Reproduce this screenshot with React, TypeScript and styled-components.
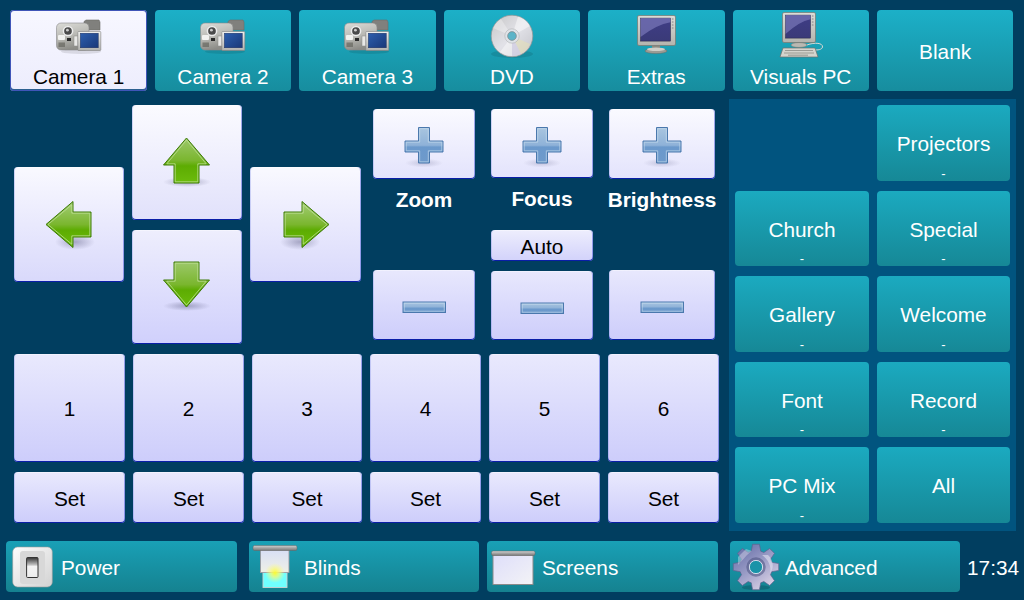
import React from "react";
import styled, { createGlobalStyle } from "styled-components";

const Global = createGlobalStyle`
  html, body { margin: 0; padding: 0; background: #013e60; }
  * { box-sizing: border-box; }
`;

const Page = styled.div`
  width: 1024px;
  height: 600px;
  overflow: hidden;
  background: #013e60;
  font-family: "Liberation Sans", Arial, sans-serif;
  font-size: 20.8px;
  color: #fff;
  display: flex;
  flex-direction: column;
`;

const Base = styled.button`
  margin: 0;
  padding: 0;
  border: 0;
  font: inherit;
  border-radius: 4px;
  display: flex;
  align-items: center;
  justify-content: center;
`;

const Light = styled(Base)<{ $from?: string; $to?: string }>`
  color: #000;
  background: linear-gradient(${(p) => p.$from || "#e9e9fd"}, ${(p) => p.$to || "#cdcdfb"});
  box-shadow: inset 0 1px 0 rgba(255, 255, 255, 0.4), inset 1px 0 0 rgba(70, 90, 220, 0.22),
    inset -1px 0 0 rgba(50, 70, 210, 0.45), inset 0 -1px 0 #0a1ea8;
`;

const TextButton = styled(Light)`
  padding-top: 2px;
`;

const Teal = styled(Base)`
  color: #fff;
  background: linear-gradient(#1cb0c8, #178d9e);
`;

const TopBar = styled.div`
  display: grid;
  grid-template-columns: repeat(7, 136.43px);
  gap: 8px;
  height: 81px;
  margin: 10px 0 0 10.4px;
`;

const TabTeal = styled(Teal)`
  flex-direction: column;
  justify-content: flex-start;
  padding-top: 2px;
`;

const TabActive = styled(TabTeal)`
  color: #000;
  background: linear-gradient(#f7f7ff, #ededfd);
  box-shadow: inset 0 0 0 1px #3f55b8, inset 0 -1px 0 1px #2c6090;
`;

const BlankTab = styled(Teal)`
  padding-top: 3px;
`;

const TabLabel = styled.span`
  margin-top: 5px;
  line-height: 24px;
  height: 24px;
`;

const Middle = styled.div`
  display: flex;
  margin-top: 8px;
  height: 432px;
`;

const Controls = styled.div`
  width: 705px;
  margin-left: 14px;
  padding-top: 6px;
  display: flex;
  flex-direction: column;
  gap: 10px;
`;

const PtzRow = styled.div`
  display: flex;
  height: 239px;
  gap: 12px;
`;

const Dpad = styled.div`
  display: flex;
  gap: 8px;
`;

const DpadColumn = styled.div<{ $w: number }>`
  width: ${(p) => p.$w}px;
  display: flex;
  flex-direction: column;
  justify-content: center;
  gap: 10px;
`;

const DpadButton = styled(Light)<{ $h: number }>`
  height: ${(p) => p.$h}px;
  width: 100%;
`;

const Adjusters = styled.div`
  display: flex;
  gap: 16px;
  padding-top: 4px;
`;

const AdjustColumn = styled.div<{ $w: number }>`
  width: ${(p) => p.$w}px;
  height: 231px;
  display: flex;
  flex-direction: column;
`;

const AdjustButton = styled(Light)<{ $h: number; $end?: boolean }>`
  height: ${(p) => p.$h}px;
  flex: none;
  ${(p) => (p.$end ? "margin-top: auto;" : "")}
`;

const AdjustLabel = styled.div`
  height: 42px;
  line-height: 42px;
  margin: 0 -6px;
  font-weight: bold;
  text-align: center;
  white-space: nowrap;
`;

const AutoButton = styled(TextButton)`
  height: 31px;
  flex: none;
  margin-top: 10px;
`;

const Presets = styled.div`
  display: grid;
  grid-template-columns: 111px 111px 110px 111px 111px 111px;
  grid-template-rows: 108px 51px;
  gap: 10px 8px;
`;

const Panel = styled.div`
  width: 287px;
  margin-left: 10px;
  padding: 6px;
  background: #01547f;
  display: grid;
  grid-template-columns: 134px 133px;
  grid-template-rows: 76px 75px 76px 75px 76px;
  gap: 10px 8px;
`;

const Source = styled(Teal)`
  position: relative;
  padding-top: 2px;
  background: linear-gradient(#1baac0, #168896);
`;

const Dash = styled.span`
  position: absolute;
  left: 0;
  right: 0;
  bottom: 0;
  font-size: 13px;
  line-height: 15px;
  text-align: center;
`;

const Spacer = styled.div``;

const BottomBar = styled.div`
  display: flex;
  align-items: center;
  height: 51px;
  margin-top: 10px;
  padding-left: 6px;
`;

const BarButton = styled(Teal)<{ $w: number; $gap: number }>`
  width: ${(p) => p.$w}px;
  height: 51px;
  margin-left: ${(p) => p.$gap}px;
  padding-left: 2px;
  justify-content: flex-start;
  gap: 5px;
  background: linear-gradient(#19a0b6, #158290);
`;

const BarLabel = styled.span`
  margin-top: 2px;
`;

const Clock = styled.div`
  margin-left: 7px;
  margin-top: 2px;
  white-space: nowrap;
`;

const IconSvg = styled.svg<{ $lift?: number; $drop?: number }>`
  width: 48px;
  height: 48px;
  flex: none;
  display: block;
  overflow: visible;
  margin-bottom: ${(p) => p.$lift || 0}px;
  margin-top: ${(p) => p.$drop || 0}px;
`;

/* ---------- icons ---------- */

const Camera = () => (
  <IconSvg viewBox="0 0 48 48">
    <defs>
      <linearGradient id="camBody" x1="0" y1="0" x2="0.3" y2="1">
        <stop offset="0" stopColor="#dcdcd8" />
        <stop offset="0.55" stopColor="#b9b9b4" />
        <stop offset="1" stopColor="#8c8c87" />
      </linearGradient>
      <linearGradient id="camScreen" x1="0" y1="0" x2="1" y2="1">
        <stop offset="0" stopColor="#2d5fae" />
        <stop offset="1" stopColor="#1a3878" />
      </linearGradient>
      <linearGradient id="camFrame" x1="0" y1="0" x2="0" y2="1">
        <stop offset="0" stopColor="#efefed" />
        <stop offset="1" stopColor="#b2b2ae" />
      </linearGradient>
    </defs>
    <ellipse cx="26" cy="39.5" rx="20" ry="2.5" fill="#000" opacity="0.1" />
    <path d="M29 9.5 L31 8 L44 8 L45 10 L45 18 L29 18 Z" fill="#80807d" stroke="#6c6c6a" strokeWidth="0.6" />
    <rect x="1.5" y="11" width="32.5" height="27" rx="4.5" fill="url(#camBody)" stroke="#88888a" strokeWidth="0.6" />
    <circle cx="13" cy="19" r="4.6" fill="#4a4a4a" stroke="#ececec" strokeWidth="1.5" />
    <circle cx="12.4" cy="18.2" r="1.4" fill="#ccc" />
    <rect x="3" y="23" width="7" height="5" rx="1" fill="#f2f2f0" />
    <rect x="12" y="26" width="4" height="3" fill="#2a2a2a" />
    <rect x="3.5" y="30.5" width="6.5" height="4.5" fill="#66665f" opacity="0.7" />
    <rect x="19" y="24" width="4" height="10" fill="#e8e8e6" stroke="#8a8a88" strokeWidth="0.5" />
    <rect x="22.8" y="19.5" width="23" height="19" rx="0.8" fill="url(#camFrame)" stroke="#80807f" strokeWidth="0.6" />
    <rect x="25.3" y="21.2" width="18" height="14.6" fill="url(#camScreen)" stroke="#1a2a55" strokeWidth="0.4" />
  </IconSvg>
);

const Disc = () => (
  <IconSvg viewBox="0 0 48 48">
    <defs>
      <linearGradient id="discBase" x1="0" y1="0" x2="1" y2="1">
        <stop offset="0" stopColor="#c6c6c6" />
        <stop offset="0.5" stopColor="#e2e2e8" />
        <stop offset="1" stopColor="#c2c2c8" />
      </linearGradient>
    </defs>
    <ellipse cx="24" cy="42" rx="21" ry="4" fill="#000" opacity="0.1" />
    <circle cx="24" cy="24" r="20.8" fill="url(#discBase)" stroke="#959595" strokeWidth="0.7" />
    <path d="M24 24 L30 4.5 A20 20 0 0 1 42 14 Z" fill="#fff" opacity="0.45" />
    <path d="M24 24 L5 16 A20 20 0 0 1 13 7 Z" fill="#fff" opacity="0.3" />
    <path d="M24 24 L12 40 A20 20 0 0 0 24 44 Z" fill="#fff" opacity="0.45" />
    <path d="M24 24 L42 32 A20 20 0 0 1 33 42 Z" fill="#e4e0b8" opacity="0.6" />
    <path d="M24 24 L24 44 A20 20 0 0 0 33 42 Z" fill="#d4d0e6" opacity="0.7" />
    <circle cx="24" cy="24" r="7.2" fill="#dfe3e8" stroke="#a8a8a8" strokeWidth="0.5" />
    <circle cx="24" cy="24" r="4.4" fill="#5cb4c8" stroke="#808080" strokeWidth="0.6" />
  </IconSvg>
);

const MonitorShape = ({ x, y, w, h }: { x: number; y: number; w: number; h: number }) => (
  <g>
    <defs>
      <linearGradient id="monScreen" x1="0" y1="0" x2="0" y2="1">
        <stop offset="0" stopColor="#3f3d86" />
        <stop offset="1" stopColor="#3a3a78" />
      </linearGradient>
      <linearGradient id="monFrame" x1="0" y1="0" x2="0" y2="1">
        <stop offset="0" stopColor="#dcdcd8" />
        <stop offset="1" stopColor="#b4b4ae" />
      </linearGradient>
    </defs>
    <rect x={x} y={y} width={w} height={h} rx="1.5" fill="url(#monFrame)" stroke="#77776f" strokeWidth="0.7" />
    <rect x={x + 3} y={y + 2.6} width={w - 8} height={h - 7} fill="url(#monScreen)" stroke="#23233f" strokeWidth="0.5" />
    <path
      d={`M${x + 3} ${y + 2.6} h${w - 8} v${(h - 7) * 0.18} Q${x + w * 0.5} ${y + h * 0.3} ${x + 3} ${y + h * 0.72} Z`}
      fill="#8b88c8"
      opacity="0.55"
    />
    <rect x={x + w - 3.6} y={y + 3} width="1.6" height="1" fill="#888" />
    <rect x={x + w - 3.6} y={y + 6} width="1.6" height="1" fill="#888" />
    <rect x={x + w - 3.6} y={y + 9} width="1.6" height="1" fill="#888" />
    <rect x={x + w - 3.6} y={y + 12} width="1.6" height="1" fill="#888" />
  </g>
);

const Monitor = () => (
  <IconSvg viewBox="0 0 48 48">
    <ellipse cx="24" cy="39" rx="11" ry="2.6" fill="#9b9b94" stroke="#6d6d66" strokeWidth="0.5" />
    <rect x="20" y="33" width="8" height="4" fill="#8a8a82" />
    <ellipse cx="24" cy="37.2" rx="9" ry="1.8" fill="#cfcfc8" />
    <MonitorShape x={5.5} y={3.5} w={38} h={30} />
  </IconSvg>
);

const Computer = () => (
  <IconSvg viewBox="0 0 48 48">
    <path d="M30 33 C38 30 46 31 45.5 35 C45 38 40 38 38 38" fill="none" stroke="#d8d8d4" strokeWidth="1" />
    <ellipse cx="22" cy="33" rx="8" ry="2.4" fill="#b9b9b2" stroke="#77776f" strokeWidth="0.5" />
    <MonitorShape x={5.5} y={0.5} w={33} h={30} />
    <path d="M6 36 L38 36 L41 45 L3 45 Z" fill="#d4d4ce" stroke="#70706a" strokeWidth="0.7" />
    <path d="M8 38.5 H36 M7 41 H37" stroke="#8d8d86" strokeWidth="0.8" />
    <path d="M11 43.2 H31" stroke="#a0a098" strokeWidth="1.2" />
  </IconSvg>
);

type Dir = "up" | "down" | "left" | "right";
const mapPt = (d: Dir, x: number, y: number): string => {
  if (d === "up") return `${x},${y}`;
  if (d === "down") return `${x},${48 - y}`;
  if (d === "left") return `${y},${x}`;
  return `${48 - y},${x}`;
};
const outer: [number, number][] = [
  [23.5, 1], [46.5, 28], [36, 28], [36, 46], [11, 46], [11, 28], [0.5, 28],
];
const inner: [number, number][] = [
  [23.5, 3], [43.2, 26.8], [34.8, 26.8], [34.8, 44.8], [12.2, 44.8], [12.2, 26.8], [3.8, 26.8],
];
const pts = (d: Dir, list: [number, number][]) => list.map(([x, y]) => mapPt(d, x, y)).join(" ");

const shadows: Record<Dir, { cx: number; cy: number; rx: number; ry: number }> = {
  up: { cx: 24, cy: 45, rx: 24, ry: 5 },
  down: { cx: 24, cy: 46, rx: 24, ry: 5 },
  left: { cx: 30, cy: 41, rx: 20, ry: 8 },
  right: { cx: 18, cy: 41, rx: 20, ry: 8 },
};

const Arrow = ({ dir }: { dir: Dir }) => {
  const s = shadows[dir];
  const lift = dir === "up" ? 3 : dir === "down" ? 6 : 0;
  return (
    <IconSvg viewBox="0 0 48 48" $lift={lift}>
      <defs>
        <linearGradient id={`arrow-${dir}`} x1="0" y1="0" x2="0" y2="1">
          <stop offset="0" stopColor={dir === "up" || dir === "down" ? "#9cc86a" : "#a4cd78"} />
          <stop offset="0.5" stopColor="#7ab62e" />
          <stop offset="0.62" stopColor="#5dac02" />
          <stop offset="1" stopColor="#6cbc0c" />
        </linearGradient>
        <radialGradient id="arrowShadow">
          <stop offset="0" stopColor="#5a5a80" stopOpacity="0.45" />
          <stop offset="1" stopColor="#5a5a80" stopOpacity="0" />
        </radialGradient>
      </defs>
      <ellipse cx={s.cx} cy={s.cy} rx={s.rx} ry={s.ry} fill="url(#arrowShadow)" />
      <polygon points={pts(dir, outer)} fill={`url(#arrow-${dir})`} stroke="#3c7a06" strokeWidth="1" />
      <polygon points={pts(dir, inner)} fill="none" stroke="#c2e29a" strokeOpacity="0.75" strokeWidth="1" />
    </IconSvg>
  );
};

const BlueDefs = () => (
  <defs>
    <linearGradient id="blueFill" x1="0" y1="0" x2="0" y2="1">
      <stop offset="0" stopColor="#a9c5e0" />
      <stop offset="0.5" stopColor="#8fb2d8" />
      <stop offset="0.55" stopColor="#6b99cc" />
      <stop offset="1" stopColor="#6e9acb" />
    </linearGradient>
    <radialGradient id="plusShadow">
      <stop offset="0" stopColor="#6a6a90" stopOpacity="0.3" />
      <stop offset="1" stopColor="#6a6a90" stopOpacity="0" />
    </radialGradient>
  </defs>
);

const Plus = () => (
  <IconSvg viewBox="0 0 48 48" $drop={4}>
    <BlueDefs />
    <ellipse cx="24" cy="41" rx="19" ry="4.5" fill="url(#plusShadow)" />
    <path
      d="M18.5 5.5 H29.5 V19 H43 V30 H29.5 V41 H18.5 V30 H5 V19 H18.5 Z"
      fill="url(#blueFill)"
      stroke="#4a78ad"
      strokeWidth="1"
    />
    <path
      d="M19.7 6.7 H28.3 V20.2 H41.8 V28.8 H28.3 V39.8 H19.7 V28.8 H6.2 V20.2 H19.7 Z"
      fill="none"
      stroke="#c8dcee"
      strokeOpacity="0.7"
      strokeWidth="0.9"
    />
  </IconSvg>
);

const Minus = () => (
  <IconSvg viewBox="0 0 48 48" $drop={4}>
    <BlueDefs />
    <rect x="3" y="19" width="42.5" height="10.5" fill="url(#blueFill)" stroke="#4a78ad" strokeWidth="1" />
    <rect x="4.2" y="20.2" width="40" height="8" fill="none" stroke="#c8dcee" strokeOpacity="0.7" strokeWidth="0.9" />
  </IconSvg>
);

const PowerIcon = () => (
  <IconSvg viewBox="0 0 48 48">
    <defs>
      <linearGradient id="swPlate" x1="0" y1="0" x2="1" y2="1">
        <stop offset="0" stopColor="#fdfdfd" />
        <stop offset="1" stopColor="#d2d2d2" />
      </linearGradient>
      <linearGradient id="swKey" x1="0" y1="0" x2="0" y2="1">
        <stop offset="0" stopColor="#333" />
        <stop offset="0.35" stopColor="#bbb" />
        <stop offset="0.45" stopColor="#f4f4f4" />
        <stop offset="1" stopColor="#ededed" />
      </linearGradient>
    </defs>
    <rect x="4.7" y="4" width="39.6" height="40" rx="5" fill="url(#swPlate)" stroke="#9a9a9a" strokeWidth="0.6" />
    <rect x="12" y="8" width="25" height="33" rx="3" fill="#d8d8d8" />
    <rect x="18.6" y="14.5" width="11.4" height="20" rx="1" fill="url(#swKey)" stroke="#333" strokeWidth="1" />
  </IconSvg>
);

const BlindsIcon = () => (
  <IconSvg viewBox="0 0 48 48">
    <defs>
      <linearGradient id="barGrey" x1="0" y1="0" x2="0" y2="1">
        <stop offset="0" stopColor="#d0d0d0" />
        <stop offset="1" stopColor="#777" />
      </linearGradient>
      <linearGradient id="blindCloth" x1="0" y1="0" x2="0" y2="1">
        <stop offset="0" stopColor="#d8dff5" />
        <stop offset="1" stopColor="#eff0e6" />
      </linearGradient>
      <radialGradient id="sun">
        <stop offset="0" stopColor="#fbfb30" />
        <stop offset="0.4" stopColor="#fafa70" stopOpacity="0.75" />
        <stop offset="1" stopColor="#fafa90" stopOpacity="0" />
      </radialGradient>
    </defs>
    <rect x="12" y="29" width="24" height="15.5" fill="#70ffff" stroke="#d0d0d0" strokeWidth="0.9" />
    <rect x="9.5" y="7" width="28.5" height="22.5" fill="url(#blindCloth)" stroke="#9a9aa0" strokeWidth="0.9" />
    <circle cx="24" cy="30" r="10" fill="url(#sun)" />
    <rect x="2" y="2.5" width="44" height="5" rx="1.5" fill="url(#barGrey)" stroke="#666" strokeWidth="0.5" />
  </IconSvg>
);

const ScreenIcon = () => (
  <IconSvg viewBox="0 0 48 48">
    <defs>
      <linearGradient id="screenCloth" x1="0" y1="0" x2="1" y2="1">
        <stop offset="0" stopColor="#dedefa" />
        <stop offset="1" stopColor="#f3f3f6" />
      </linearGradient>
      <linearGradient id="screenBar" x1="0" y1="0" x2="0" y2="1">
        <stop offset="0" stopColor="#d4d4d4" />
        <stop offset="1" stopColor="#777" />
      </linearGradient>
    </defs>
    <rect x="4" y="12" width="40" height="29.5" fill="url(#screenCloth)" stroke="#8a8a8a" strokeWidth="1" />
    <rect x="2.5" y="8" width="43.5" height="4.5" rx="1.5" fill="url(#screenBar)" stroke="#666" strokeWidth="0.5" />
  </IconSvg>
);

const gearPath = (() => {
  const teeth = 8;
  const cx = 24;
  const cy = 24;
  const ro = 23;
  const ri = 16.5;
  const p: string[] = [];
  for (let i = 0; i < teeth; i++) {
    const a = (i * Math.PI * 2) / teeth - Math.PI / 2;
    const w1 = 0.24;
    const w2 = 0.15;
    const pt = (r: number, t: number) => `${(cx + r * Math.cos(t)).toFixed(2)} ${(cy + r * Math.sin(t)).toFixed(2)}`;
    p.push(`${i === 0 ? "M" : "L"}${pt(ri, a - w1 - 0.05)}`);
    p.push(`L${pt(ro, a - w2)}`);
    p.push(`L${pt(ro, a + w2)}`);
    p.push(`L${pt(ri, a + w1 + 0.05)}`);
  }
  return p.join(" ") + " Z";
})();

const GearIcon = () => (
  <IconSvg viewBox="0 0 48 48">
    <defs>
      <linearGradient id="gearFill" x1="0.1" y1="0.2" x2="0.7" y2="1">
        <stop offset="0" stopColor="#7178ae" />
        <stop offset="0.45" stopColor="#9a9cc6" />
        <stop offset="1" stopColor="#d8d0e4" />
      </linearGradient>
    </defs>
    <ellipse cx="24" cy="44.5" rx="14" ry="2.5" fill="#0b4a5c" opacity="0.4" />
    <path d={gearPath} fill="url(#gearFill)" stroke="#5c628e" strokeWidth="0.7" strokeLinejoin="round" />
    <path d="M6 22 C12 16 14 12 20 8 L14 6 L6 14 Z" fill="#e3e3f2" opacity="0.4" />
    <path d="M30 12 C36 16 40 24 38 30 C42 26 42 18 36 12 Z" fill="#e8e8f4" opacity="0.55" />
    <circle cx="24" cy="24" r="8.4" fill="none" stroke="#4a5280" strokeOpacity="0.55" strokeWidth="2.6" />
    <circle cx="24" cy="24" r="6.6" fill="#1a93a8" stroke="#eeeef6" strokeWidth="0.8" />
  </IconSvg>
);

/* ---------- data ---------- */

const tabs = [
  { label: "Camera 1", icon: <Camera />, active: true },
  { label: "Camera 2", icon: <Camera /> },
  { label: "Camera 3", icon: <Camera /> },
  { label: "DVD", icon: <Disc /> },
  { label: "Extras", icon: <Monitor /> },
  { label: "Visuals PC", icon: <Computer /> },
];

const sources: { label: string; dash: boolean }[] = [
  { label: "Projectors", dash: true },
  { label: "Church", dash: true },
  { label: "Special", dash: true },
  { label: "Gallery", dash: true },
  { label: "Welcome", dash: true },
  { label: "Font", dash: true },
  { label: "Record", dash: true },
  { label: "PC Mix", dash: true },
  { label: "All", dash: false },
];

const bar = [
  { label: "Power", icon: <PowerIcon />, w: 231, gap: 0 },
  { label: "Blinds", icon: <BlindsIcon />, w: 230, gap: 12 },
  { label: "Screens", icon: <ScreenIcon />, w: 231, gap: 8 },
  { label: "Advanced", icon: <GearIcon />, w: 230, gap: 12 },
];

export default function App() {
  return (
    <Page>
      <Global />
      <TopBar>
        {tabs.map((t) => {
          const Tab = t.active ? TabActive : TabTeal;
          return (
            <Tab key={t.label}>
              {t.icon}
              <TabLabel>{t.label}</TabLabel>
            </Tab>
          );
        })}
        <BlankTab>Blank</BlankTab>
      </TopBar>

      <Middle>
        <Controls>
          <PtzRow>
            <Dpad>
              <DpadColumn $w={110}>
                <DpadButton $h={115} $from="#f9f9ff" $to="#d9d9fb">
                  <Arrow dir="left" />
                </DpadButton>
              </DpadColumn>
              <DpadColumn $w={110}>
                <DpadButton $h={115} $from="#fbfbff" $to="#e1e1fb">
                  <Arrow dir="up" />
                </DpadButton>
                <DpadButton $h={114} $from="#eeeefd" $to="#d0d0fc">
                  <Arrow dir="down" />
                </DpadButton>
              </DpadColumn>
              <DpadColumn $w={111}>
                <DpadButton $h={115} $from="#f9f9ff" $to="#d9d9fb">
                  <Arrow dir="right" />
                </DpadButton>
              </DpadColumn>
            </Dpad>
            <Adjusters>
              <AdjustColumn $w={102}>
                <AdjustButton $h={70} $from="#fafaff" $to="#e3e3fc">
                  <Plus />
                </AdjustButton>
                <AdjustLabel>Zoom</AdjustLabel>
                <AdjustButton $h={70} $end $from="#e8e8fd" $to="#cdcdfb">
                  <Minus />
                </AdjustButton>
              </AdjustColumn>
              <AdjustColumn $w={102}>
                <AdjustButton $h={69} $from="#fafaff" $to="#e3e3fc">
                  <Plus />
                </AdjustButton>
                <AdjustLabel>Focus</AdjustLabel>
                <AutoButton $from="#eeeefd" $to="#d2d2fb">Auto</AutoButton>
                <AdjustButton $h={69} $end $from="#e8e8fd" $to="#cdcdfb">
                  <Minus />
                </AdjustButton>
              </AdjustColumn>
              <AdjustColumn $w={106}>
                <AdjustButton $h={70} $from="#fafaff" $to="#e3e3fc">
                  <Plus />
                </AdjustButton>
                <AdjustLabel>Brightness</AdjustLabel>
                <AdjustButton $h={70} $end $from="#e8e8fd" $to="#cdcdfb">
                  <Minus />
                </AdjustButton>
              </AdjustColumn>
            </Adjusters>
          </PtzRow>
          <Presets>
            {[1, 2, 3, 4, 5, 6].map((n) => (
              <TextButton key={n}>{n}</TextButton>
            ))}
            {[1, 2, 3, 4, 5, 6].map((n) => (
              <TextButton key={n}>Set</TextButton>
            ))}
          </Presets>
        </Controls>

        <Panel>
          <Spacer />
          {sources.map((s) => (
            <Source key={s.label}>
              {s.label}
              {s.dash && <Dash>-</Dash>}
            </Source>
          ))}
        </Panel>
      </Middle>

      <BottomBar>
        {bar.map((b) => (
          <BarButton key={b.label} $w={b.w} $gap={b.gap}>
            {b.icon}
            <BarLabel>{b.label}</BarLabel>
          </BarButton>
        ))}
        <Clock>17:34</Clock>
      </BottomBar>
    </Page>
  );
}
